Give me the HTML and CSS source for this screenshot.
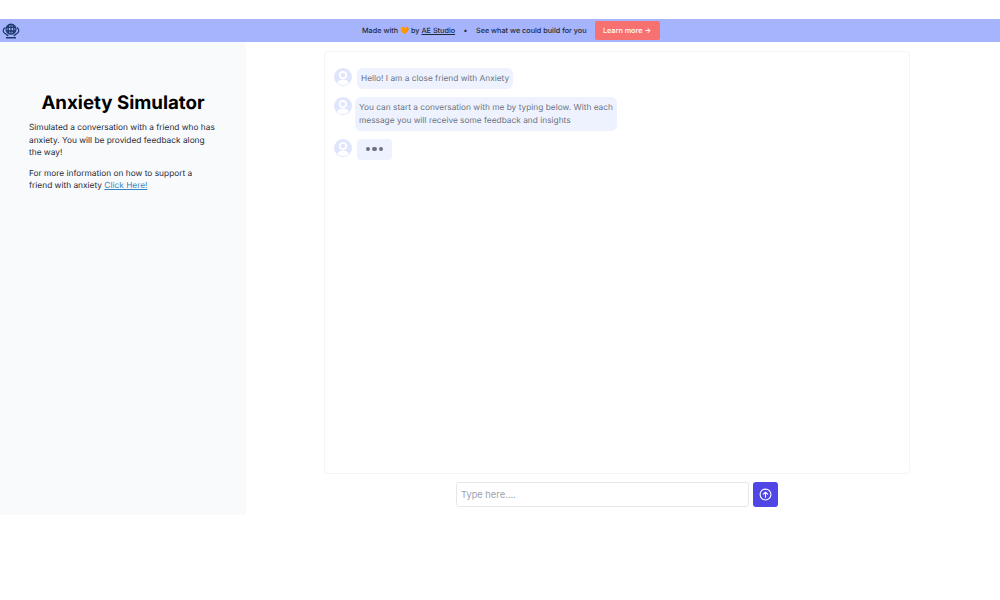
FILE: index.html
```html
<!DOCTYPE html>
<html lang="en">
<head>
  <meta charset="UTF-8">
  <title>Anxiety Simulator</title>
  <link rel="stylesheet" href="styles.css">
</head>
<body>
  <div class="banner">
    <svg class="logo" viewBox="0 0 20 20" fill="none" stroke="#1e3a6e" stroke-width="1.400">
      <circle cx="10" cy="8" r="5.500"/>
      <path d="M10 2.500v11M4.800 6h10.400M4.800 10h10.400M7.800 3c-1.300 3-1.300 7 0 10M12.200 3c1.300 3 1.300 7 0 10"/>
      <path d="M3.500 6c-3.500 2.500-2.500 6 1 7.500l2.500 2M16.500 6c3.500 2.500 2.500 6-1 7.500l-2.500 2M4.500 17.500h11"/>
    </svg>
    <div class="banner-text">
      <span>Made with <span class="heart">🧡</span> by <a href="#" class="studio">AE Studio</a></span>
      <span class="dot">•</span>
      <span>See what we could build for you</span>
      <a href="#" class="learn">Learn more →</a>
    </div>
  </div>
  <div class="main">
    <div class="sidebar">
      <h1>Anxiety Simulator</h1>
      <p>Simulated a conversation with a friend who has anxiety. You will be provided feedback along the way!</p>
      <p>For more information on how to support a friend with anxiety <a href="#" class="link">Click Here!</a></p>
    </div>
    <div class="content">
      <div class="chat">
        <div class="msg">
          <svg class="avatar" viewBox="0 0 18 18"><circle cx="9" cy="9" r="9" fill="#dfe5fd"/><circle cx="9" cy="7" r="3.200" fill="none" stroke="#fff" stroke-width="1.700"/><path d="M3.200 14.800c1.200-2.400 3.200-3.300 5.800-3.300s4.600 .9 5.800 3.300c-1.500 1.400-3.500 2.200-5.800 2.200s-4.300-.8-5.800-2.200z" fill="#fff"/></svg>
          <div class="bubble">Hello! I am a close friend with Anxiety</div>
        </div>
        <div class="msg">
          <svg class="avatar" viewBox="0 0 18 18"><circle cx="9" cy="9" r="9" fill="#dfe5fd"/><circle cx="9" cy="7" r="3.200" fill="none" stroke="#fff" stroke-width="1.700"/><path d="M3.200 14.800c1.200-2.400 3.200-3.300 5.800-3.300s4.600 .9 5.800 3.300c-1.500 1.400-3.500 2.200-5.800 2.200s-4.300-.8-5.800-2.200z" fill="#fff"/></svg>
          <div class="bubble wide">You can start a conversation with me by typing below. With each message you will receive some feedback and insights</div>
        </div>
        <div class="msg">
          <svg class="avatar" viewBox="0 0 18 18"><circle cx="9" cy="9" r="9" fill="#dfe5fd"/><circle cx="9" cy="7" r="3.200" fill="none" stroke="#fff" stroke-width="1.700"/><path d="M3.200 14.800c1.200-2.400 3.200-3.300 5.800-3.300s4.600 .9 5.800 3.300c-1.500 1.400-3.500 2.200-5.800 2.200s-4.300-.8-5.800-2.200z" fill="#fff"/></svg>
          <div class="bubble typing"><i></i><i></i><i></i></div>
        </div>
      </div>
      <form class="send">
        <input type="text" class="input" placeholder="Type here....">
        <button type="button" class="button">
          <svg viewBox="0 0 24 24" width="13" height="13" fill="none" stroke="#fff" stroke-width="2" stroke-linecap="round" stroke-linejoin="round"><circle cx="12" cy="12" r="10"/><path d="M12 17V8M8 11.500 12 7.500l4 4"/></svg>
        </button>
      </form>
    </div>
  </div>
</body>
</html>
```

FILE: styles.css
```css
body {
  margin: 0;
  padding-top: 19px;
  font-family: Inter, "Liberation Sans", sans-serif;
  text-rendering: geometricPrecision;
  background-color: #ffffff;
  color: #111827;
}
.banner {
  height: 23px;
  background-color: #a5b4fc;
  display: flex;
  align-items: center;
  position: relative;
}
.logo {
  width: 18px;
  height: 18px;
  margin-left: 2px;
}
.banner-text {
  position: absolute;
  left: 362px;
  display: flex;
  align-items: center;
  font-size: 7.250px;
  font-weight: 500;
  color: #1f2937;
}
.heart {
  font-size: 7.250px;
}
.studio {
  color: #1f2937;
}
.dot {
  margin: 0 8.500px;
}
.learn {
  margin-left: 8px;
  width: 65px;
  text-align: center;
  height: 19px;
  line-height: 19px;
  background-color: #f87171;
  color: #ffffff;
  border-radius: 2px;
  text-decoration: none;
}
.main {
  display: flex;
  height: 473px;
}
.sidebar {
  width: 246px;
  box-sizing: border-box;
  background-color: #f9fafb;
  padding: 50px 29px 0;
  font-size: 8.330px;
  line-height: 12.500px;
  color: #1f2937;
}
h1 {
  margin: 0 0 8px;
  font-size: 18.700px;
  line-height: 22px;
  font-weight: 700;
  text-align: center;
  color: #000000;
}
p {
  margin: 0 0 8px;
}
.link {
  color: #3b82c4;
}
.content {
  flex: 1;
  padding: 9px 90px 0 78px;
}
.chat {
  height: 423px;
  box-sizing: border-box;
  border: 1px solid #f3f4f6;
  border-radius: 4px;
  padding: 16px 9px;
  display: flex;
  flex-direction: column;
  gap: 8px;
}
.msg {
  display: flex;
  align-items: flex-start;
  gap: 5px;
}
.avatar {
  width: 18px;
  height: 18px;
  flex-shrink: 0;
}
.bubble {
  background-color: #eef2ff;
  border-radius: 6px;
  padding: 5px 4px 3.500px;
  font-size: 8.330px;
  line-height: 12.500px;
  color: #6b7280;
}
.wide {
  width: 254px;
  margin-left: -2px;
}
.typing {
  display: flex;
  gap: 2px;
  align-items: center;
  height: 13px;
  padding: 4px 8.500px;
  border-radius: 4px;
}
.typing i {
  width: 4.500px;
  height: 4.500px;
  border-radius: 50%;
  background-color: #6b7280;
}
.send {
  display: flex;
  justify-content: center;
  gap: 4px;
  margin-top: 8px;
}
.input {
  width: 293px;
  height: 25px;
  box-sizing: border-box;
  border: 1px solid #e5e7eb;
  border-radius: 3px;
  padding: 0 4px;
  font-family: Inter, "Liberation Sans", sans-serif;
  font-size: 9.300px;
  background-color: #ffffff;
}
.input::placeholder {
  color: #9ca3af;
}
.button {
  width: 25px;
  height: 25px;
  padding: 0;
  border: none;
  border-radius: 3px;
  background-color: #4f46e5;
  display: flex;
  align-items: center;
  justify-content: center;
}
```
